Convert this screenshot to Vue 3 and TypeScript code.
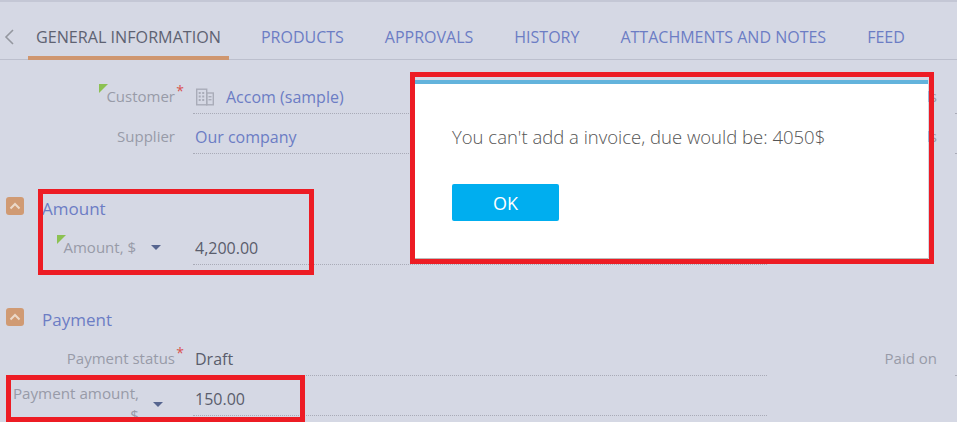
<script setup lang="ts">
const tabs = ['GENERAL INFORMATION', 'PRODUCTS', 'APPROVALS', 'HISTORY', 'ATTACHMENTS AND NOTES', 'FEED']
</script>

<template>
  <div class="page">
    <nav class="tabs">
      <svg class="back" width="12" height="18" viewBox="0 0 12 18">
        <polyline points="10,2 3,9 10,16" fill="none" stroke="#94979f" stroke-width="1.6" />
      </svg>
      <a v-for="(tab, i) in tabs" :key="tab" class="tab" :class="{ active: i === 0 }">{{ tab }}</a>
    </nav>

    <section class="top-rows">
      <div class="row">
        <div class="label"><span class="text marked required">Customer</span></div>
        <div class="value link">
          <svg class="building" width="18" height="18" viewBox="0 0 18 18">
            <g fill="none" stroke="#a9acb8" stroke-width="1.4">
              <rect x="0.7" y="1.2" width="10" height="15.6" />
              <rect x="10.7" y="5" width="6.6" height="11.8" />
            </g>
            <g fill="#a9acb8">
              <rect x="2.7" y="4" width="2" height="2" /><rect x="6.2" y="4" width="2" height="2" />
              <rect x="2.7" y="7.5" width="2" height="2" /><rect x="6.2" y="7.5" width="2" height="2" />
              <rect x="2.7" y="11" width="2" height="2" /><rect x="6.2" y="11" width="2" height="2" />
              <rect x="12.5" y="8" width="3" height="1.4" /><rect x="12.5" y="11" width="3" height="1.4" />
            </g>
          </svg>
          Accom (sample)
        </div>
        <div class="side-label">Details</div>
        <div class="side-value"></div>
      </div>
      <div class="row">
        <div class="label"><span class="text">Supplier</span></div>
        <div class="value link">Our company</div>
        <div class="side-label">Details</div>
        <div class="side-value"></div>
      </div>
    </section>

    <section class="group amount-group">
      <header class="group-head">
        <span class="toggle">
          <svg width="12" height="8" viewBox="0 0 12 8">
            <polyline points="1.5,6.5 6,2 10.5,6.5" fill="none" stroke="#ecd9c9" stroke-width="2" />
          </svg>
        </span>
        <h3>Amount</h3>
      </header>
      <div class="row">
        <div class="label">
          <span class="text marked">Amount, $</span>
          <i class="caret"></i>
        </div>
        <div class="value">4,200.00</div>
      </div>
    </section>

    <section class="group payment-group">
      <header class="group-head">
        <span class="toggle">
          <svg width="12" height="8" viewBox="0 0 12 8">
            <polyline points="1.5,6.5 6,2 10.5,6.5" fill="none" stroke="#ecd9c9" stroke-width="2" />
          </svg>
        </span>
        <h3>Payment</h3>
      </header>
      <div class="row">
        <div class="label"><span class="text required">Payment status</span></div>
        <div class="value">Draft</div>
        <div class="side-label">Paid on</div>
        <div class="side-value"></div>
      </div>
      <div class="row">
        <div class="label">
          <span class="text wrapped">Payment amount, $</span>
          <i class="caret low"></i>
        </div>
        <div class="value">150.00</div>
      </div>
    </section>

    <div class="dialog">
      <p>You can't add a invoice, due would be: 4050$</p>
      <button type="button">OK</button>
    </div>

    <div class="mark mark-dialog"></div>
    <div class="mark mark-amount"></div>
    <div class="mark mark-payment"></div>
  </div>
</template>

<style scoped>
.page {
  position: relative;
  width: 957px;
  height: 422px;
  overflow: hidden;
  box-sizing: border-box;
  border-top: 2px solid #c4c7d5;
  background: #d5d8e4;
  font-family: "Open Sans", "Noto Sans", sans-serif;
  font-size: 15px;
  color: #5a5d6c;
}

.tabs {
  display: flex;
  align-items: stretch;
  height: 58px;
  box-sizing: border-box;
  border-bottom: 1px solid #bcbfcd;
}

.back {
  margin: 26px 0 0 3px;
  flex: none;
}

.tab {
  box-sizing: border-box;
  height: 58px;
  padding: 24px 8px 0;
  margin-right: 25px;
  font-size: 16px;
  line-height: 22px;
  color: #6c7dc4;
  white-space: nowrap;
}

.tab.active {
  margin-left: 13px;
  margin-right: 24px;
  font-size: 16.15px;
  color: #5e6272;
  border-bottom: 4px solid #cf966f;
}

.top-rows {
  margin-top: 14px;
}

.row {
  display: flex;
  height: 40px;
}

.label {
  flex: none;
  width: 193px;
  box-sizing: border-box;
  padding: 3px 18px 0 0;
  display: flex;
  justify-content: flex-end;
  align-items: center;
  color: #989ba8;
  font-size: 15px;
}

.text {
  position: relative;
  line-height: 20px;
}

.text.marked::before {
  content: "";
  position: absolute;
  left: -7px;
  top: -2px;
  border-style: solid;
  border-width: 9px 9px 0 0;
  border-color: #8cc152 transparent transparent transparent;
}

.text.required::after {
  content: "*";
  position: absolute;
  right: -9px;
  top: -5px;
  color: #d9534f;
  font-size: 14px;
}

.text.wrapped {
  width: 127px;
  margin-top: 12px;
  font-size: 15.2px;
  text-align: right;
  line-height: 22px;
}

.caret {
  flex: none;
  width: 0;
  height: 0;
  margin: 2px 14px 0 15px;
  border-style: solid;
  border-width: 5px 5px 0;
  border-color: #56658f transparent transparent;
}

.caret.low {
  margin: 14px 12px 0 14px;
}

.value {
  flex: none;
  width: 574px;
  box-sizing: border-box;
  padding: 7px 0 0 2px;
  display: flex;
  align-items: center;
  border-bottom: 1px dotted #a9abb7;
  font-size: 16px;
}

.value.link {
  color: #6c7dc4;
}

.building {
  margin: 0 12px 0 1px;
}

.side-label {
  flex: none;
  width: 170px;
  padding-top: 3px;
  display: flex;
  justify-content: flex-end;
  align-items: center;
  color: #989ba8;
  font-size: 15px;
}

.side-value {
  flex: 1;
  margin-left: 18px;
  border-bottom: 1px dotted #a9abb7;
}

.group-head {
  display: flex;
  align-items: center;
  height: 22px;
}

.group-head h3 {
  margin: -2px 0 0 18px;
  font-size: 17px;
  font-weight: 400;
  color: #6c7dc4;
}

.toggle {
  flex: none;
  align-self: flex-start;
  width: 18px;
  height: 18px;
  margin: -1px 0 0 6px;
  border-radius: 3px;
  background: #d09a73;
  display: flex;
  align-items: center;
  justify-content: center;
}

.amount-group {
  margin-top: 44px;
}

.amount-group .row {
  margin-top: 5px;
}

.payment-group {
  margin-top: 44px;
}

.payment-group .row:first-of-type {
  margin-top: 5px;
}

.dialog {
  position: absolute;
  left: 414px;
  top: 78px;
  width: 514px;
  height: 179px;
  box-sizing: border-box;
  border-top: 4px solid #63b3dc;
  border-bottom: 1px solid #bbb;
  background: #fff;
  padding-left: 38px;
}

.dialog p {
  margin: 41px 0 0;
  font-size: 18.5px;
  font-weight: 300;
  line-height: 24px;
  color: #555;
}

.dialog button {
  display: block;
  width: 107px;
  height: 37px;
  margin-top: 35px;
  border: none;
  border-radius: 2px;
  background: #00aeef;
  color: #fff;
  font-family: inherit;
  font-size: 18px;
}

.mark {
  position: absolute;
  box-sizing: border-box;
  border: 5px solid #ed1c24;
}

.mark-dialog {
  left: 410px;
  top: 70px;
  width: 524px;
  height: 192px;
}

.mark-amount {
  left: 38px;
  top: 187px;
  width: 276px;
  height: 86px;
}

.mark-payment {
  left: 6px;
  top: 373px;
  width: 299px;
  height: 47px;
}
</style>
